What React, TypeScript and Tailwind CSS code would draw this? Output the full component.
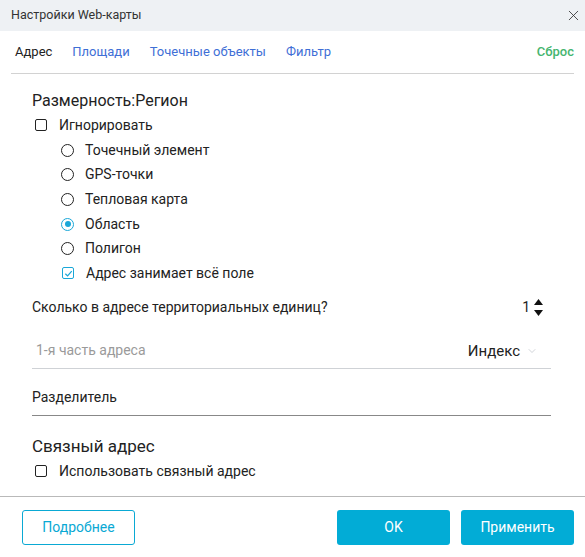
import { X, ChevronDown } from 'lucide-react'

function Checkbox({ checked = false }: { checked?: boolean }) {
    return (
        <span
            className={`flex h-[12px] w-[12px] shrink-0 items-center justify-center rounded-[2px] border-[1.5px] ${checked ? 'border-[#1aa7d8]' : 'border-[#222]'}`}
        >
            {checked && (
                <svg width="9" height="9" viewBox="0 0 10 10">
                    <path d="M1.5 5.2 L4 7.6 L8.6 2.4" fill="none" stroke="#1aa7d8" strokeWidth="1.4" />
                </svg>
            )}
        </span>
    )
}

function Radio({ checked = false }: { checked?: boolean }) {
    return (
        <span
            className={`flex h-[13px] w-[13px] shrink-0 items-center justify-center rounded-full border-[1.5px] ${checked ? 'border-[#1aa7d8]' : 'border-[#222]'}`}
        >
            {checked && <span className="h-[6px] w-[6px] rounded-full bg-[#1aa7d8]" />}
        </span>
    )
}

const radios = [
    { label: 'Точечный элемент', checked: false },
    { label: 'GPS-точки', checked: false },
    { label: 'Тепловая карта', checked: false },
    { label: 'Область', checked: true },
    { label: 'Полигон', checked: false },
]

export default function App() {
    return (
        <div className="flex h-[557px] w-[585px] flex-col overflow-hidden bg-white font-['Roboto',sans-serif] text-[#222]">
            {/* Title bar */}
            <div className="flex h-[31px] shrink-0 items-center justify-between bg-[#eef1f4] pl-[11px] pr-[3px]">
                <span className="text-[12.5px] text-[#333]">Настройки Web-карты</span>
                <X size={17} strokeWidth={1.2} className="text-[#333]" />
            </div>

            {/* Tabs */}
            <div className="mx-[11px] flex h-[43px] shrink-0 items-center border-b border-[#d2d2d2] pl-[4px] text-[13px]">
                <span className="text-[#222]">Адрес</span>
                <span className="ml-[20px] text-[#3f6fd6]">Площади</span>
                <span className="ml-[20px] text-[#3f6fd6]">Точечные объекты</span>
                <span className="ml-[20px] text-[#3f6fd6]">Фильтр</span>
                <span className="ml-auto font-medium text-[#45b56f]">Сброс</span>
            </div>

            {/* Content */}
            <div className="flex flex-1 flex-col pl-[32px] pr-[34px]">
                <div className="mt-[16px] h-[22px] text-[16px] leading-[22px]">Размерность:Регион</div>

                <div className="mt-[1px] flex h-[24.7px] items-center text-[14px]">
                    <span className="ml-[3px]"><Checkbox /></span>
                    <span className="ml-[12px]">Игнорировать</span>
                </div>

                {radios.map((r) => (
                    <div key={r.label} className="flex h-[24.7px] items-center text-[14px]">
                        <span className="ml-[29px]"><Radio checked={r.checked} /></span>
                        <span className="ml-[11px]">{r.label}</span>
                    </div>
                ))}

                <div className="flex h-[24.7px] items-center text-[14px]">
                    <span className="ml-[30px]"><Checkbox checked /></span>
                    <span className="ml-[12px]">Адрес занимает всё поле</span>
                </div>

                <div className="mt-[10px] flex h-[24px] items-center text-[14px]">
                    <span>Сколько в адресе территориальных единиц?</span>
                    <span className="ml-auto">1</span>
                    <span className="ml-[4px] mr-[8px] flex flex-col items-center gap-[5px]">
                        <svg width="9" height="6" viewBox="0 0 9 6"><path d="M4.5 0 L9 6 L0 6 Z" fill="#111" /></svg>
                        <svg width="9" height="6" viewBox="0 0 9 6"><path d="M0 0 L9 0 L4.5 6 Z" fill="#111" /></svg>
                    </span>
                </div>

                <div className="mt-[15px] flex h-[34px] items-center border-b border-[#cfd2d6] pb-[1px]">
                    <span className="pl-[4px] text-[14px] text-[#9a9a9a]">1-я часть адреса</span>
                    <span className="ml-auto text-[15px]">Индекс</span>
                    <ChevronDown size={12} strokeWidth={1.3} className="ml-[6px] mr-[13px] text-[#b8bcc4]" />
                </div>

                <div className="mt-[12px] flex h-[35px] items-center border-b border-[#888] text-[14px]">
                    Разделитель
                </div>

                <div className="mt-[18px] h-[24px] text-[17px] leading-[24px]">Связный адрес</div>

                <div className="mt-[1px] flex h-[24.7px] items-center text-[14px]">
                    <span className="ml-[3px]"><Checkbox /></span>
                    <span className="ml-[12px]">Использовать связный адрес</span>
                </div>
            </div>

            {/* Footer */}
            <div className="flex h-[61px] shrink-0 items-center border-t border-[#b9b9b9] pl-[22px] pr-[11px] text-[14px]">
                <button className="h-[35px] w-[113px] rounded-[3px] border border-[#0aa9d4] text-[#0aa9d4]">
                    Подробнее
                </button>
                <button className="ml-auto h-[35px] w-[113px] rounded-[3px] bg-[#02acd6] text-white">
                    OK
                </button>
                <button className="ml-[11px] h-[35px] w-[113px] rounded-[3px] bg-[#02acd6] text-white">
                    Применить
                </button>
            </div>
        </div>
    )
}
